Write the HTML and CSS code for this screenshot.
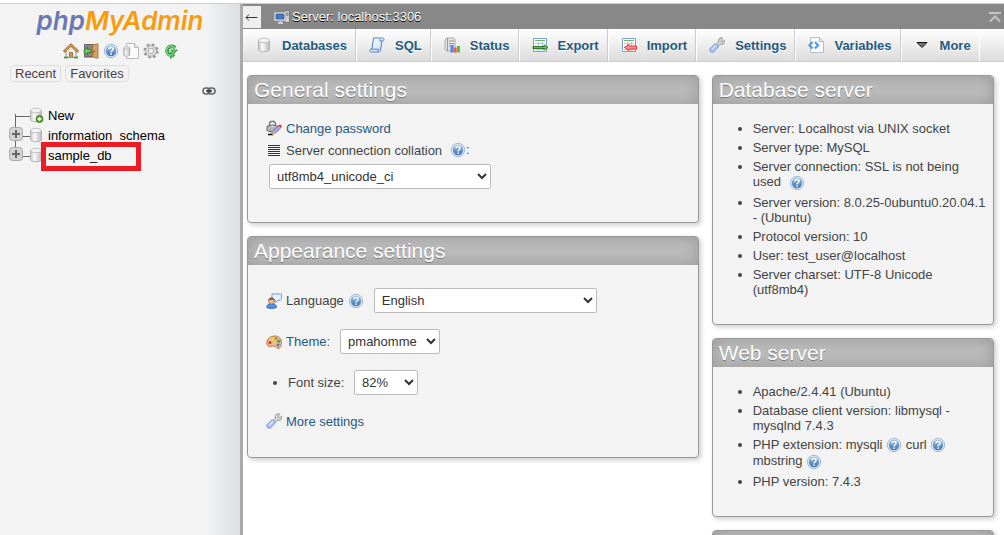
FILE: index.html
```html
<!DOCTYPE HTML>
<html lang="en">

<head>
	<meta charset="utf-8">
	<title>localhost:3306 | phpMyAdmin</title>
	<link rel="stylesheet" href="styles.css">
</head>

<body>

	<!-- shared icons -->
	<svg class="sprite" aria-hidden="true">
		<defs>
			<linearGradient id="blue" x1="0" y1="0" x2="0" y2="1">
				<stop offset="0" stop-color="#9dbde2" />
				<stop offset="1" stop-color="#3f72b0" />
			</linearGradient>
			<linearGradient id="metal" x1="0" y1="0" x2="1" y2="0">
				<stop offset="0" stop-color="#c4c4c4" />
				<stop offset=".35" stop-color="#fafafa" />
				<stop offset="1" stop-color="#b8b8b8" />
			</linearGradient>
			<linearGradient id="paper" x1="0" y1="0" x2="1" y2="1">
				<stop offset="0" stop-color="#ffffff" />
				<stop offset="1" stop-color="#c5dcf8" />
			</linearGradient>
		</defs>
		<symbol id="help" viewBox="0 0 16 16">
			<circle cx="8" cy="8" r="6.700" fill="#dfe9f5" stroke="#8fabcc" stroke-width=".8" />
			<circle cx="8" cy="8" r="5.200" fill="url(#blue)" />
			<path d="M6 6.500c0-2.700 4.200-2.600 4.100-.2 0 1.500-2 1.400-2 3.100" fill="none" stroke="#fff" stroke-width="1.500" />
			<path d="M7.300 10.500h1.600v1.500h-1.600z" fill="#fff" />
		</symbol>
		<symbol id="db" viewBox="0 0 16 16">
			<path d="M2.500 3.500v9c0 3 11 3 11 0v-9z" fill="url(#metal)" stroke="#aaa" stroke-width=".8" />
			<ellipse cx="8" cy="3.500" rx="5.500" ry="2.200" fill="#f4f4f4" stroke="#b5b5b5" stroke-width=".8" />
		</symbol>
		<symbol id="wrench" viewBox="0 0 16 16">
			<path d="M7 7.500l2.500-2.500C9 2.500 10.500.6 13 .6l.8 1-1.600 1.600.6 1.400 1.400-.2 1.300-1.200.5 1c0 2.400-2.500 3.800-4.700 3L9 9.500z" fill="#d6d6d6" stroke="#8a8a8a" stroke-width=".9" />
			<path d="M6.200 6.600l3.200 3.200-4.600 4.900c-2.200 1.700-5.300-.9-3.600-3.300z" fill="#a9c4f2" stroke="#6d8fd0" stroke-width=".9" />
			<path d="M3 12.300l4-4" stroke="#dfeaff" stroke-width="1.300" />
		</symbol>
		<symbol id="grid" viewBox="0 0 16 16">
			<path d="M1.500 1.500h13v13h-13z" fill="#fff" stroke="#7e9fd6" />
			<path d="M3 3.500h10" stroke="#6cba60" />
			<path d="M3 6.500h10M3 9.500h10M3 12.500h10M6.500 5v9M10.500 5v9" stroke="#b3c8e8" />
		</symbol>
	</svg>

	<div class="page">
		<div class="sidebar">
			<a href="#" class="logo"><span class="php">php</span><span class="admin">MyAdmin</span></a>

			<div class="quick">
				<a href="#" aria-label="Home"><svg viewBox="0 0 16 16">
					<path d="M3 8v6.500h10V8L8 3z" fill="#f6eedf" stroke="#999" />
					<path d="M6.500 14.500v-5h3v5" fill="#c99b5b" stroke="#765" stroke-width=".8" />
					<path d="M.8 8.700L8 2l7.200 6.700" fill="none" stroke="#8d5c22" stroke-width="2.600" />
					<path d="M1.300 8.200L8 2l6.700 6.200" fill="none" stroke="#e0a85c" stroke-width="1.200" />
					<path d="M1 14.500h4M11 14.500h4" stroke="#52a53c" stroke-width="2" />
				</svg></a>
				<a href="#" aria-label="Log out"><svg viewBox="0 0 16 16">
					<path d="M1.500 1.500h9v12h-9z" fill="#888" stroke="#666" />
					<path d="M9.500 2L15 .8v14.400l-5.500-1z" fill="#d9a066" stroke="#9c6a35" stroke-width=".8" />
					<path d="M11 7.500v2" stroke="#5b3713" />
					<path d="M.5 8L4.500 4v2.400H8v3.200H4.500V12z" fill="#72cf62" stroke="#23771b" stroke-width=".8" />
					<path d="M1 14.500h8" stroke="#aaa" />
				</svg></a>
				<a href="#" aria-label="phpMyAdmin documentation"><svg><use href="#help" /></svg></a>
				<a href="#" aria-label="Documentation"><svg viewBox="0 0 16 16">
					<path d="M3.500.5h8l4 4v11h-12z" fill="#fafafa" stroke="#bbb" />
					<path d="M11.500.5v4h4" fill="#e5e5e5" stroke="#bbb" />
					<path d="M.8 5v7c0 1.500 6 1.500 6 0V5z" fill="url(#metal)" stroke="#aaa" stroke-width=".8" />
					<ellipse cx="3.800" cy="5" rx="3" ry="1.200" fill="#f4f4f4" stroke="#aaa" stroke-width=".8" />
				</svg></a>
				<a href="#" aria-label="Navigation panel settings"><svg viewBox="0 0 16 16">
					<circle cx="8" cy="8" r="6.300" fill="none" stroke="#999" stroke-width="2.600" stroke-dasharray="2.600 2.350" />
					<circle cx="8" cy="8" r="4" fill="none" stroke="#a5a5a5" stroke-width="3.600" />
					<circle cx="8" cy="8" r="4" fill="none" stroke="#dedede" stroke-width="2" />
				</svg></a>
				<a href="#" aria-label="Reload navigation panel"><svg viewBox="0 0 16 16">
					<path d="M12 5A4.500 4.500 0 1 0 8 12.300" fill="none" stroke="#2f8f3a" stroke-width="3.600" />
					<path d="M7.500 7h7L11 10.500z" fill="#62bf66" stroke="#2f8f3a" stroke-width=".8" />
					<path d="M7.500 9v6.600l4.500-3.300z" fill="#62bf66" stroke="#2f8f3a" stroke-width=".8" />
					<path d="M11.800 5.500A4.500 4.500 0 1 0 8.500 12.300" fill="none" stroke="#79cf7d" stroke-width="1.800" />
				</svg></a>
			</div>

			<div class="recent">
				<button type="button">Recent</button>
				<button type="button">Favorites</button>
			</div>

			<a href="#" class="link_main" aria-label="Unlink from main panel"><svg viewBox="0 0 14 8">
				<rect x="1" y="1" width="7" height="6" rx="3" fill="none" stroke="#666" stroke-width="1.600" />
				<rect x="6" y="1" width="7" height="6" rx="3" fill="none" stroke="#666" stroke-width="1.600" />
				<path d="M4 4h6" stroke="#333" stroke-width="1.500" />
			</svg></a>

			<ul class="tree">
				<li>
					<svg class="branch" viewBox="0 0 21 20"><path d="M6.500 20V9M6 11.500h15" /></svg>
					<svg class="db" viewBox="0 0 16 16">
						<use href="#db" />
						<circle cx="11.500" cy="12" r="3.500" fill="#5a9e33" stroke="#3c7420" stroke-width=".8" />
						<path d="M11.500 10v4M9.500 12h4" stroke="#fff" stroke-width="1.400" />
					</svg>
					<a href="#">New</a>
				</li>
				<li>
					<button type="button" class="branch" aria-label="Expand information_schema"><svg viewBox="0 0 21 20">
						<path d="M6.500 0v20M6 11.500h15" />
						<rect x=".5" y="2.500" width="13" height="13" rx="3" />
						<path class="plus" d="M7 5v8M3 9h8" />
					</svg></button>
					<svg class="db"><use href="#db" /></svg>
					<a href="#">information_schema</a>
				</li>
				<li>
					<button type="button" class="branch" aria-label="Expand sample_db"><svg viewBox="0 0 21 20">
						<path d="M6.500 0v10M6 11.500h15" />
						<rect x=".5" y="2.500" width="13" height="13" rx="3" />
						<path class="plus" d="M7 5v8M3 9h8" />
					</svg></button>
					<svg class="db"><use href="#db" /></svg>
					<a href="#">sample_db</a>
					<span class="mark"></span>
				</li>
			</ul>
		</div>

		<div class="main">
			<div class="serverinfo">
				<button type="button" class="toggle" aria-label="Hide panel"><svg viewBox="0 0 18 22">
					<path d="M3 11.500h11.500M6 8.500l-3 3 3 3" fill="none" stroke="#333" />
				</svg></button>
				<svg class="icon" viewBox="0 0 16 16">
					<path d="M10.500 1.500h5v12h-5z" fill="#d0d0d0" stroke="#777" />
					<path d="M11.500 4h3M11.500 6h3" stroke="#666" />
					<path d="M.5 3.500h11v8H.5z" fill="#e5e5e5" stroke="#bbb" />
					<path d="M2 5h8v5H2z" fill="#4678c0" stroke="#345c9c" stroke-width=".8" />
					<path d="M4 14h5M6.500 12v2" stroke="#ccc" stroke-width="2" />
				</svg>
				<a href="#">Server: localhost:3306</a>
				<button type="button" class="totop" aria-label="Scroll to top"><svg viewBox="0 0 12 12">
					<path d="M0 2h12M1 10.500L6 5.500l5 5" fill="none" stroke="#c4c4c4" stroke-width="2" />
				</svg></button>
			</div>

			<ul class="tabs">
				<li><a href="#"><svg class="icon"><use href="#db" /></svg>Databases</a></li>
				<li><a href="#"><svg class="icon" viewBox="0 0 16 16">
					<path d="M4.500 1h9c2 0 2 3 .2 3H13l-1.500 9c-.3 1.500-1 2-2 2H2c-1.800 0-1.500-3 .3-3H3z" fill="url(#paper)" stroke="#4b83cc" />
					<path d="M2.500 12.200h7c-.8 1 0 2.500 0 2.500M13 4h-2V2" fill="none" stroke="#4b83cc" />
				</svg>SQL</a></li>
				<li><a href="#"><svg class="icon" viewBox="0 0 16 16">
					<path d="M1 3l2-2h7l1 1.500V14H2.500L1 12.500z" fill="#e2e2e2" stroke="#aaa" />
					<path d="M5 4h5M5 6.500h5M5 9h3M3.500 1v13" stroke="#999" />
					<path d="M6.500 8h3v7.500h-3z" fill="#4b85f0" />
					<path d="M9.700 10.500h3v5h-3z" fill="#f05a3c" />
					<path d="M13 9h3v6.500h-3z" fill="#4dc44a" />
				</svg>Status</a></li>
				<li><a href="#"><svg class="icon" viewBox="0 0 16 16">
					<use href="#grid" />
					<path d="M1 9.500h11V8l4 2.500-4 2.500v-1.500H1z" fill="#6cbf50" stroke="#27701a" stroke-width=".9" />
				</svg>Export</a></li>
				<li><a href="#"><svg class="icon" viewBox="0 0 16 16">
					<use href="#grid" />
					<path d="M15.500 9H8V7.500l-4.500 3L8 13.500V12h7.500z" fill="#ff9a94" stroke="#f0302a" />
				</svg>Import</a></li>
				<li><a href="#"><svg class="icon"><use href="#wrench" /></svg>Settings</a></li>
				<li><a href="#"><svg class="icon" viewBox="0 0 16 16">
					<path d="M2.500.5h9l4 4v11h-13z" fill="#fbfbfb" stroke="#bbb" />
					<path d="M11.500.5v4h4" fill="#e5e5e5" stroke="#bbb" />
					<path d="M4.500 5L1.500 8.200l3 3.200M7 5l3 3.200-3 3.200" fill="none" stroke="#4c9bf0" stroke-width="2.200" />
				</svg>Variables</a></li>
				<li><a href="#"><svg class="icon" viewBox="0 0 16 16">
					<path d="M3 5.500h10L8 10.500z" fill="#777" stroke="#111" />
				</svg>More</a></li>
			</ul>

			<div class="content">
				<div class="column">
					<div class="group">
						<h2>General settings</h2>
						<div class="settings general">
							<a href="#" class="row"><svg class="icon" viewBox="0 0 16 16">
								<path d="M3.500 6V4c0-3.500 6-3.500 6 0v2" fill="none" stroke="#888" stroke-width="1.600" />
								<path d="M1 6.500L6.500 5 12 6.500v4L7 12.500l-6-2z" fill="#dcdce2" stroke="#444" stroke-width=".9" />
								<path d="M2.500 8h8M2.500 10h8" stroke="#888" />
								<path d="M2 14.500h5" stroke="#111" stroke-width="1.500" />
								<path d="M6 14l1-3 6-5.500 2 2L9 13.500z" fill="#b6a7ee" stroke="#6a5fb0" stroke-width=".8" />
								<path d="M12.500 5.500L14 4.200l2 2L14.700 7.500z" fill="#e0332a" />
								<path d="M6 14.500l.8-3 2.200 2z" fill="#f0c030" />
							</svg>Change password</a>
							<div class="row">
								<svg class="icon" viewBox="0 0 16 16"><path d="M2 3.500h12M2 5.500h12M2 7.500h12M2 9.500h12M2 11.500h12M2 13.500h12" stroke="#333" /></svg>
								<label for="collation">Server connection collation</label>
								<span><a href="#" class="help wide" aria-label="Collation documentation"><svg class="icon"><use href="#help" /></svg></a>:</span>
							</div>
							<select id="collation">
								<option>utf8mb4_unicode_ci</option>
							</select>
						</div>
					</div>

					<div class="group">
						<h2>Appearance settings</h2>
						<div class="settings appearance">
							<div class="row">
								<svg class="icon" viewBox="0 0 16 16">
									<path d="M6 1h9l.6 1v4l-1.200 1.200H12L9 9.500V7H6z" fill="#e8f3ff" stroke="#6f9cd4" />
									<path d="M.8 14.500c0-3 2-4 4.700-4s5 1 5 4c-2 1.300-7.700 1.300-9.700 0z" fill="#4f8fe8" stroke="#2e61ac" stroke-width=".8" />
									<circle cx="5.500" cy="8" r="3" fill="#edb782" stroke="#9c6130" stroke-width=".6" />
									<path d="M2.300 7.500c0-4 6.400-4 6.400 0L6 6.500z" fill="#8a5a30" />
								</svg>
								<label for="lang">Language</label>
								<a href="#" class="help" aria-label="Language documentation"><svg class="icon"><use href="#help" /></svg></a>
								<select id="lang">
									<option>English</option>
								</select>
							</div>
							<div class="row">
								<svg class="icon" viewBox="0 0 16 16">
									<path d="M.8 9C.8 4.500 5 2 9 2s6.500 3 6.500 6.500-1.500 6-3.500 6-1.500-2.500-4-2.500-3.500.8-5 .3S.8 10.500.8 9z" fill="#ecb98a" stroke="#b86f3c" stroke-width=".9" />
									<circle cx="4" cy="8.500" r="1.500" fill="#e4352c" />
									<circle cx="6.300" cy="5" r="1.500" fill="#f7d630" />
									<circle cx="10" cy="4.600" r="1.500" fill="#70b83c" />
									<circle cx="12.700" cy="7.300" r="1.500" fill="#3aa14a" />
									<circle cx="12" cy="11" r="1.500" fill="#4677d4" />
								</svg>
								<label for="theme"><a href="#">Theme:</a></label>
								<select id="theme">
									<option>pmahomme</option>
								</select>
							</div>
							<ul>
								<li>
									<label for="size">Font size:</label>
									<select id="size">
										<option>82%</option>
									</select>
								</li>
							</ul>
							<a href="#" class="row"><svg class="icon"><use href="#wrench" /></svg>More settings</a>
						</div>
					</div>
				</div>

				<div class="column">
					<div class="group">
						<h2>Database server</h2>
						<ul class="info">
							<li>Server: Localhost via UNIX socket</li>
							<li>Server type: MySQL</li>
							<li>Server connection: SSL is not being used <a href="#" class="help wide" aria-label="SSL documentation"><svg class="icon"><use href="#help" /></svg></a></li>
							<li>Server version: 8.0.25-0ubuntu0.20.04.1 - (Ubuntu)</li>
							<li>Protocol version: 10</li>
							<li>User: test_user@localhost</li>
							<li>Server charset: UTF-8 Unicode (utf8mb4)</li>
						</ul>
					</div>

					<div class="group">
						<h2>Web server</h2>
						<ul class="info">
							<li>Apache/2.4.41 (Ubuntu)</li>
							<li>Database client version: libmysql - mysqlnd 7.4.3</li>
							<li>PHP extension: mysqli <a href="#" class="help" aria-label="mysqli documentation"><svg class="icon"><use href="#help" /></svg></a> curl <a href="#" class="help" aria-label="curl documentation"><svg class="icon"><use href="#help" /></svg></a> mbstring <a href="#" class="help" aria-label="mbstring documentation"><svg class="icon"><use href="#help" /></svg></a></li>
							<li>PHP version: 7.4.3</li>
						</ul>
					</div>

					<div class="group">
						<div class="bar"></div>
					</div>
				</div>
			</div>
		</div>
	</div>

</body>

</html>
```

FILE: styles.css
```css
* {
	box-sizing: border-box;
}

body {
	margin: 0;
	padding-top: 3px;
	height: 100vh;
	overflow: hidden;
	font: 13px/15px "Liberation Sans", Arial, sans-serif;
	color: #444;
	background: #fff;
}

ul,
h2 {
	padding: 0;
	margin: 0;
}

a {
	color: #235a81;
	text-decoration: none;
}

button {
	padding: 0;
	border: 0;
	background: none;
	font: inherit;
	color: inherit;
}

svg {
	display: block;
}

.sprite {
	position: absolute;
	width: 0;
	height: 0;
}

.icon {
	flex: none;
	width: 16px;
	height: 16px;
}

.page {
	display: flex;
	height: 100%;
	border-top: 1px solid #ccc;
}

/* left navigation */
.sidebar {
	flex: none;
	width: 243px;
	border-right: 3px solid #aaa;
	background: linear-gradient(to right, #f3f3f3 204px, #dce0e3 240px);
}

.logo {
	display: block;
	text-align: center;
	font: italic 600 26px/34px Inter, "Open Sans", sans-serif;
}

.php {
	color: #6c78af;
}

.admin {
	color: #f89c0e;
}

.quick {
	display: flex;
	justify-content: center;
	gap: 4px;
	padding: 5px 0 0 2px;
}

.quick svg {
	width: 16px;
	height: 16px;
}

.recent {
	display: flex;
	gap: 4px;
	padding: 6px 10px 0;
}

.recent button {
	height: 17px;
	padding: 0 4px;
	border: 1px solid #ddd;
	border-radius: 4px;
	line-height: 15px;
}

.link_main {
	display: block;
	width: 14px;
	margin: 5px 24px 0 auto;
}

.link_main svg {
	width: 14px;
	height: 8px;
}

.tree {
	padding: 10px 0 0 9px;
	list-style: none;
}

.tree li {
	display: flex;
	align-items: center;
	position: relative;
	height: 20px;
}

.tree a {
	margin-left: 4px;
	color: #000;
}

.tree svg {
	flex: none;
}

.branch,
.branch svg {
	width: 21px;
	height: 20px;
}

.branch path {
	fill: none;
	stroke: #666;
}

.branch rect {
	fill: #d3d3d3;
	stroke: #aaa;
}

.branch .plus {
	stroke: #666;
	stroke-width: 2;
}

/* the cylinder overlaps the end of its branch line */
.db {
	width: 16px;
	height: 16px;
	margin-left: -2px;
}

.mark {
	position: absolute;
	left: 32px;
	top: -3px;
	width: 100px;
	height: 29px;
	border: 5px solid #ed1c24;
}

/* top bar */
.main {
	flex: 1;
	min-width: 0;
}

.serverinfo {
	display: flex;
	align-items: center;
	height: 25px;
	padding-right: 3px;
	background: #888;
}

.serverinfo a {
	margin-left: 2px;
	color: #fff;
	text-shadow: 0 1px 0 #000;
}

.serverinfo .icon {
	margin-left: 13px;
}

.toggle {
	width: 18px;
	height: 22px;
	background: #eee;
}

.totop {
	width: 12px;
	margin-left: auto;
}

.tabs {
	display: flex;
	height: 33px;
	padding-left: 1px;
	list-style: none;
	border-bottom: 1px solid #ccc;
	background: linear-gradient(#fff, #dcdcdc);
}

.tabs li {
	border-right: 1px solid #fff;
}

.tabs a {
	display: flex;
	align-items: center;
	gap: 10px;
	height: 32px;
	padding: 0 8px 0 12px;
	border-right: 1px solid #ccc;
	font-weight: bold;
	text-shadow: 0 1px 0 #fff;
}

.tabs li:last-child a {
	border-right: 0;
}

/* settings groups */
.content {
	display: grid;
	grid-template-columns: 8fr 5fr;
	gap: 13px;
	padding: 13px 10px 0 4px;
}

.column {
	display: flex;
	flex-direction: column;
	gap: 13px;
	min-width: 0;
}

.group {
	border: 1px solid #999;
	border-radius: 4px;
	background: #f3f3f3;
	box-shadow: 2px 2px 5px #ccc;
}

.group h2,
.bar {
	height: 28px;
	padding-left: 6px;
	border-radius: 3px 3px 0 0;
	background: #bbb;
	box-shadow: inset 0 0 15px #999;
	font-size: 21px;
	font-weight: normal;
	line-height: 28px;
	color: #fff;
	text-shadow: 0 1px 0 #777;
}

.settings {
	padding: 0 18px;
}

.general {
	padding-top: 15px;
	padding-bottom: 33px;
}

.appearance {
	padding-top: 23px;
	padding-bottom: 26px;
}

.row {
	display: flex;
	align-items: center;
	gap: 4px;
}

.general .row {
	height: 18px;
	margin-bottom: 4px;
}

.appearance .row,
.appearance li {
	min-height: 25px;
	margin-bottom: 16px;
}

.appearance > a.row {
	min-height: 20px;
	margin-bottom: 0;
}

.appearance ul {
	padding-left: 22px;
}

select {
	height: 25px;
	padding: 0 3px;
	border: 1px solid #bbb;
	border-radius: 2px;
	background: #fff;
	color: #333;
	font: inherit;
}

#collation {
	width: 222px;
	margin: 1px 0 0 3px;
}

#lang {
	width: 223px;
	margin-left: 6px;
}

#theme {
	width: 100px;
	margin-left: 6px;
}

#size {
	width: 64px;
	margin-left: 6px;
}

.help {
	display: inline-block;
	vertical-align: middle;
}

.wide {
	margin-left: 4px;
}

.info {
	padding: 17px 5px 23px 40px;
}

.info li {
	margin-bottom: 4px;
}
```
